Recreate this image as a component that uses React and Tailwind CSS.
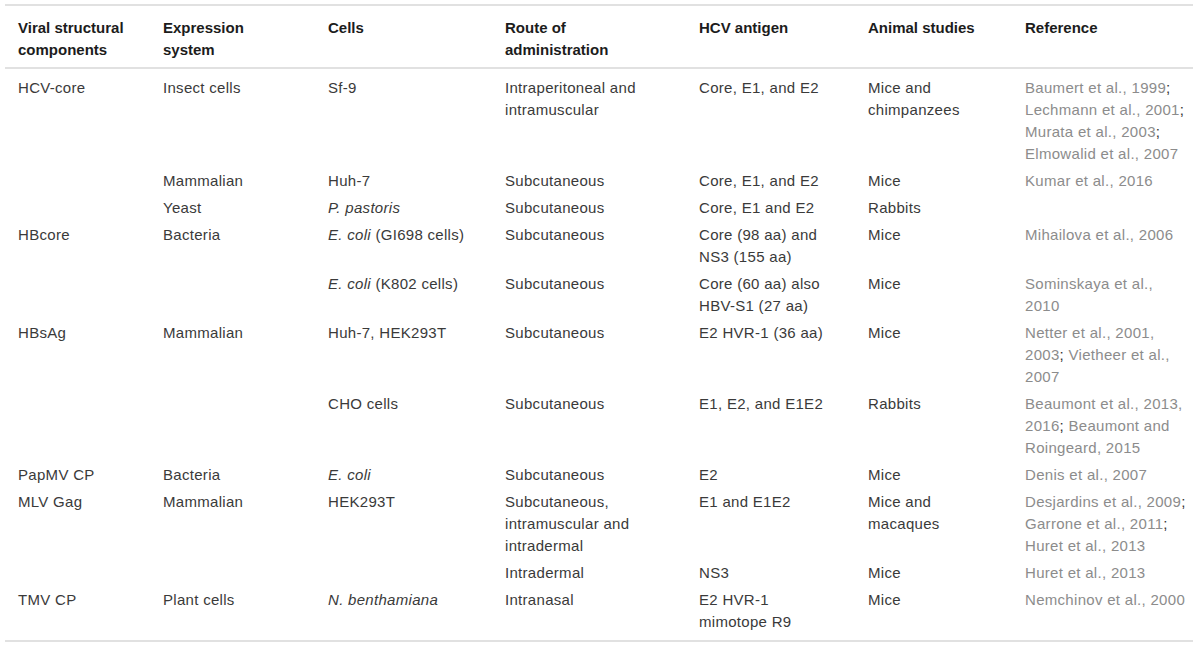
const cols = ['w-[145px]', 'w-[165px]', 'w-[177px]', 'w-[194px]', 'w-[169px]', 'w-[157px]', 'w-[181px]'];

const header = [
  ['Viral structural', 'components'],
  ['Expression', 'system'],
  ['Cells'],
  ['Route of', 'administration'],
  ['HCV antigen'],
  ['Animal studies'],
  ['Reference'],
];

// a ref cell is a list of lines, each line a list of [text, isSeparator]
const rows = [
  {
    cells: [
      ['HCV-core'],
      ['Insect cells'],
      ['Sf-9'],
      ['Intraperitoneal and', 'intramuscular'],
      ['Core, E1, and E2'],
      ['Mice and', 'chimpanzees'],
    ],
    refs: [
      [['Baumert et al., 1999'], [';', true]],
      [['Lechmann et al., 2001'], [';', true]],
      [['Murata et al., 2003'], [';', true]],
      [['Elmowalid et al., 2007']],
    ],
  },
  {
    cells: [[], ['Mammalian'], ['Huh-7'], ['Subcutaneous'], ['Core, E1, and E2'], ['Mice']],
    refs: [[['Kumar et al., 2016']]],
  },
  {
    cells: [[], ['Yeast'], [<><i>P. pastoris</i></>], ['Subcutaneous'], ['Core, E1 and E2'], ['Rabbits']],
    refs: [],
  },
  {
    cells: [
      ['HBcore'],
      ['Bacteria'],
      [<><i>E. coli</i> (GI698 cells)</>],
      ['Subcutaneous'],
      ['Core (98 aa) and', 'NS3 (155 aa)'],
      ['Mice'],
    ],
    refs: [[['Mihailova et al., 2006']]],
  },
  {
    cells: [
      [],
      [],
      [<><i>E. coli</i> (K802 cells)</>],
      ['Subcutaneous'],
      ['Core (60 aa) also', 'HBV-S1 (27 aa)'],
      ['Mice'],
    ],
    refs: [[['Sominskaya et al.,']], [['2010']]],
  },
  {
    cells: [['HBsAg'], ['Mammalian'], ['Huh-7, HEK293T'], ['Subcutaneous'], ['E2 HVR-1 (36 aa)'], ['Mice']],
    refs: [
      [['Netter et al., 2001,']],
      [['2003'], ['; ', true], ['Vietheer et al.,']],
      [['2007']],
    ],
  },
  {
    cells: [[], [], ['CHO cells'], ['Subcutaneous'], ['E1, E2, and E1E2'], ['Rabbits']],
    refs: [
      [['Beaumont et al., 2013,']],
      [['2016'], ['; ', true], ['Beaumont and']],
      [['Roingeard, 2015']],
    ],
  },
  {
    cells: [['PapMV CP'], ['Bacteria'], [<><i>E. coli</i></>], ['Subcutaneous'], ['E2'], ['Mice']],
    refs: [[['Denis et al., 2007']]],
  },
  {
    cells: [
      ['MLV Gag'],
      ['Mammalian'],
      ['HEK293T'],
      ['Subcutaneous,', 'intramuscular and', 'intradermal'],
      ['E1 and E1E2'],
      ['Mice and', 'macaques'],
    ],
    refs: [
      [['Desjardins et al., 2009'], [';', true]],
      [['Garrone et al., 2011'], [';', true]],
      [['Huret et al., 2013']],
    ],
  },
  {
    cells: [[], [], [], ['Intradermal'], ['NS3'], ['Mice']],
    refs: [[['Huret et al., 2013']]],
  },
  {
    cells: [
      ['TMV CP'],
      ['Plant cells'],
      [<><i>N. benthamiana</i></>],
      ['Intranasal'],
      ['E2 HVR-1', 'mimotope R9'],
      ['Mice'],
    ],
    refs: [[['Nemchinov et al., 2000']]],
  },
];

const Lines = ({ lines }) => (
  <>
    {lines.map((l, i) => (
      <div key={i} className="whitespace-nowrap">{l}</div>
    ))}
  </>
);

export default function App() {
  return (
    <div className="w-[1200px] h-[648px] bg-white pt-[4px] pl-[5px] font-['Liberation_Sans',Arial,sans-serif]">
      <table className="table-fixed border-collapse w-[1188px] text-[15px] leading-[22px] text-[#3a3a3a]">
        <colgroup>
          {cols.map((c, i) => <col key={i} className={c} />)}
        </colgroup>
        <thead>
          <tr className="border-y-2 border-[#e1e1e1]">
            {header.map((h, i) => (
              <th key={i} className="text-left align-top font-bold text-[#1c1c1c] pl-[13px] pt-[11px] pb-[6px]">
                <Lines lines={h} />
              </th>
            ))}
          </tr>
        </thead>
        <tbody className="border-b-2 border-[#e1e1e1] tracking-[0.3px]">
          {rows.map((r, ri) => {
            const pad = ri === 0 ? 'pt-[8px] pb-[3px]' : ri === rows.length - 1 ? 'pt-[2px] pb-[7px]' : 'pt-[2px] pb-[3px]';
            return (
              <tr key={ri}>
                {r.cells.map((c, ci) => (
                  <td key={ci} className={`align-top pl-[13px] ${pad}`}>
                    <Lines lines={c} />
                  </td>
                ))}
                <td className={`align-top pl-[13px] ${pad}`}>
                  {r.refs.map((line, li) => (
                    <div key={li} className="whitespace-nowrap">
                      {line.map(([t, sep], ti) => (
                        <span key={ti} className={sep ? 'text-[#333]' : 'text-[#8c8c8c]'}>{t}</span>
                      ))}
                    </div>
                  ))}
                </td>
              </tr>
            );
          })}
        </tbody>
      </table>
    </div>
  );
}
